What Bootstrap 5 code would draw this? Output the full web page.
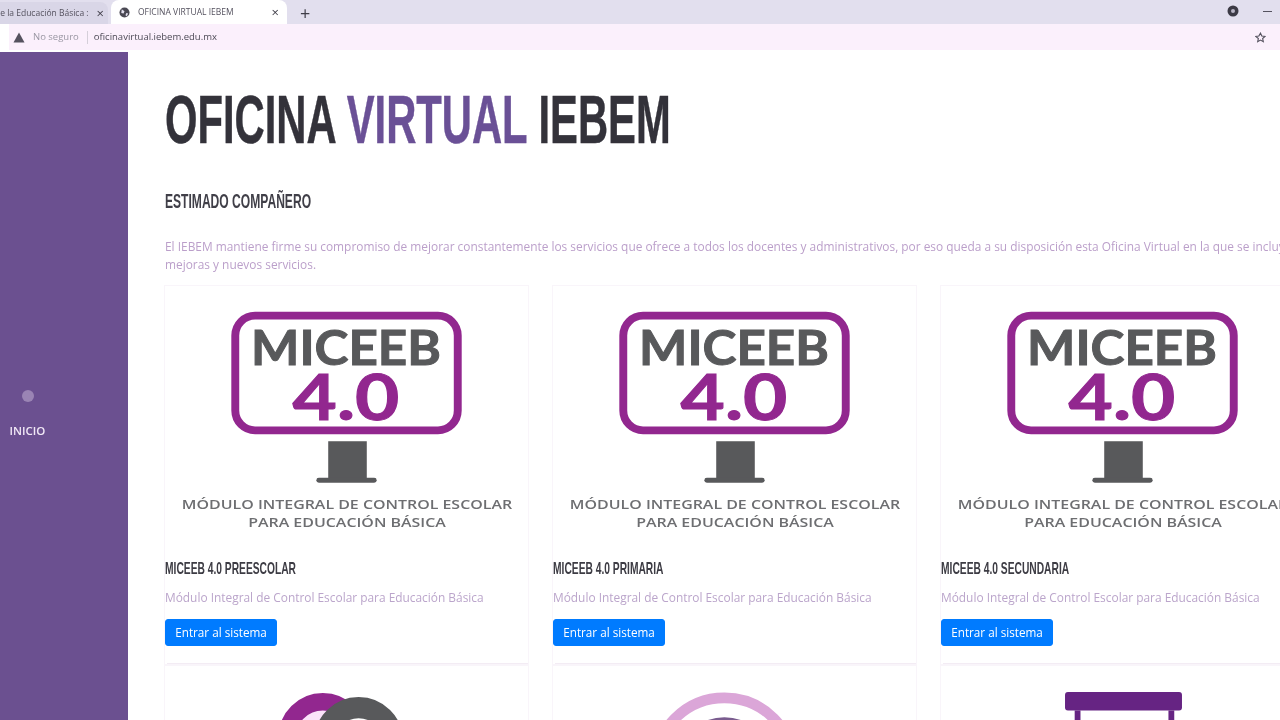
<!DOCTYPE html>
<html lang="es">
<head>
    <meta charset="UTF-8" />
    <title>OFICINA VIRTUAL IEBEM</title>
    <link rel="stylesheet" href="https://cdn.jsdelivr.net/npm/bootstrap@5.3.0/dist/css/bootstrap.min.css" />
    <style>
        html, body { height: 720px; overflow: hidden; background: #fff; }
        body { font-family: "Open Sans", "Liberation Sans", sans-serif; filter: blur(.35px); }
        .tab-strip { height: 24px; background: #e2dfee; color: #55525f; }
        .tab-off { width: 108px; height: 22px; margin-top: 2px; background: #d9d6e7; border-radius: 0 8px 0 0; font-size: 8.5px; white-space: nowrap; overflow: hidden; }
        .tab-on { width: 176px; height: 24px; margin-left: 3px; background: #fff; border-radius: 8px 8px 0 0; font-size: 8.5px; }
        .tab-x { font-size: 13px; line-height: 1; color: #3f3d48; }
        .tab-plus { font-size: 18px; line-height: 1; margin-left: 13px; color: #3f3d48; }
        .win-btns { margin-top: 5px; }
        .win-min { width: 9px; height: 1px; margin: 0 8px 0 24px; background: #55525f; }
        .addr-bar { height: 26px; background: #fff; }
        .addr-pill { height: 26px; margin-left: 9px; background: #fbf0fc; font-size: 9.5px; }
        .addr-muted { color: #9a97a3; }
        .addr-sep { width: 1px; height: 13px; background: #d5cfd9; }
        .addr-url { color: #4d4a56; margin-left: -2px; }
        .addr-star { margin-right: 14px; }
        .page-wrap { height: 670px; border-top: 2px solid #fff; }
        .side-menu { width: 128px; background: #6b5090; padding: 338px 0 0 9px; color: #fff; }
        .side-item { width: 37px; }
        .side-dot { width: 12px; height: 12px; border-radius: 50%; background: #9a84b4; }
        .side-label { margin-top: 22px; font-size: 11.5px; font-weight: 600; line-height: 14px; color: #f1e8f6; }
        .main-area { padding: 0 0 0 36px; width: 1152px; flex: none; }
        .squeeze { display: block; font-family: "Liberation Sans Narrow", "Liberation Sans", sans-serif; font-weight: 700; white-space: nowrap; transform-origin: left center; margin: 0; }
        .big-title { font-size: 68px; line-height: 68px; margin: 33px 0 0 1px; color: #33323a; transform: scaleX(.614); -webkit-text-stroke: .5px; }
        .big-title span { color: #6a5096; }
        .sub-title { font-size: 21px; line-height: 24px; margin: 36px 0 0 1px; color: #403f48; transform: scaleX(.575); }
        .intro-text { width: 1145px; margin: 24px 0 0 1px; font-size: 11.9px; line-height: 18px; color: #bb9fca; }
        .card-row { display: flex; gap: 23px; width: 1145px; margin-top: 12px; }
        .mod-card { width: 365px; height: 380px; flex: none; border-color: #f9f5fa; border-radius: 0; background: transparent; }
        .mod-card svg { display: block; }
        .logo-line { font-family: "Open Sans", "Liberation Sans", sans-serif; font-weight: 600; font-size: 13.5px; fill: #6d6e71; text-anchor: middle; }
        .logo-big { font-family: Lato, "Liberation Sans", sans-serif; font-weight: 700; stroke-width: 1px; }
        .card-name { font-size: 17px; line-height: 20px; margin-top: 10px; color: #3d3c44; transform: scaleX(.603); }
        .card-note { margin: 9px 0 0; font-size: 11.9px; line-height: 18px; color: #bba5cb; white-space: nowrap; }
        .enter-btn { margin-top: 13px; width: 112px; height: 27px; padding: 0; font-size: 11.7px; line-height: 25px; border-radius: 3px; background: #007bff; border-color: #007bff; }
        .card-rule { height: 1px; margin: 17px 0 0 2px; background: #f3ecf4; }
        .mod-card-low { height: 60px; border-color: #f9f5fa; border-radius: 0; width: 365px; flex: none; background: transparent; }
    </style>
</head>
<body>

<div class="tab-strip d-flex align-items-start">
    <div class="tab-off d-flex align-items-center">
        <span class="flex-grow-1 overflow-hidden text-end">e la Educación Básica :</span>
        <span class="tab-x ms-2 me-1">×</span>
    </div>
    <div class="tab-on d-flex align-items-center px-2">
        <svg width="11" height="11" viewBox="0 0 12 12" class="me-2 flex-shrink-0"><circle cx="6" cy="6" r="5.5" fill="#4a4853"/><path d="M3 2.5 6 4.5 5 7 2.5 6.5ZM8 6.5 10 7 8.5 10 7 9Z" fill="#e2dfee"/></svg>
        <span class="flex-grow-1">OFICINA VIRTUAL IEBEM</span>
        <span class="tab-x">×</span>
    </div>
    <span class="tab-plus mt-1">+</span>
    <div class="ms-auto d-flex align-items-center win-btns">
        <svg width="12" height="12" viewBox="0 0 12 12"><circle cx="6" cy="6" r="5.5" fill="#3c3a45"/><circle cx="6" cy="6" r="2" fill="#b9b5c6"/></svg>
        <span class="d-block win-min"></span>
    </div>
</div>

<div class="addr-bar">
    <div class="addr-pill d-flex align-items-center gap-2">
        <svg width="12" height="11" viewBox="0 0 12 11" class="ms-1"><path d="M6 .5 11.5 10.5H.5Z" fill="#55525f"/></svg>
        <span class="addr-muted">No seguro</span>
        <span class="addr-sep"></span>
        <span class="addr-url">oficinavirtual.iebem.edu.mx</span>
        <svg width="11" height="11" viewBox="0 0 24 24" class="ms-auto addr-star"><path d="M12 2.5l2.9 6.3 6.9.8-5.1 4.7 1.4 6.8-6.1-3.4-6.1 3.4 1.4-6.8L1.400 9.600l6.900-.8Z" fill="none" stroke="#55525f" stroke-width="2.500"/></svg>
    </div>
</div>

<div class="page-wrap d-flex">
    <div class="side-menu flex-shrink-0">
        <div class="side-item d-flex flex-column align-items-center">
            <div class="side-dot"></div>
            <div class="side-label">INICIO</div>
        </div>
    </div>

    <div class="main-area">
        <h1 class="squeeze big-title">OFICINA <span>VIRTUAL</span> IEBEM</h1>
        <h2 class="squeeze sub-title">ESTIMADO COMPAÑERO</h2>
        <p class="intro-text">El IEBEM mantiene firme su compromiso de mejorar constantemente los servicios que ofrece a todos los docentes y administrativos, por eso queda a su disposición esta Oficina Virtual en la que se incluyen mejoras y nuevos servicios.</p>
        <div id="cards" class="card-row"></div>
        <div class="card-row mt-0">
            <div class="card mod-card-low">
                <svg width="365" height="60" viewBox="0 0 365 60"><circle cx="157" cy="74" r="37" fill="#fbe3fa" stroke="#92278f" stroke-width="18"/><circle cx="194" cy="78" r="35" fill="#fff" stroke="#58595b" stroke-width="22"/></svg>
            </div>
            <div class="card mod-card-low">
                <svg width="365" height="60" viewBox="0 0 365 60"><circle cx="171" cy="105" r="72" fill="none" stroke="#dba6d8" stroke-width="11"/><circle cx="171" cy="105" r="52" fill="#7a5c8f"/></svg>
            </div>
            <div class="card mod-card-low">
                <svg width="365" height="60" viewBox="0 0 365 60"><rect x="122" y="27" width="121" height="19" rx="3" fill="#662483"/><rect x="132" y="46" width="6" height="14" fill="#662483"/><rect x="229" y="46" width="6" height="14" fill="#662483"/></svg>
            </div>
        </div>
    </div>
</div>

<script src="https://cdn.jsdelivr.net/npm/bootstrap@5.3.0/dist/js/bootstrap.bundle.min.js"></script>
<script>
  const levels = ["PREESCOLAR", "PRIMARIA", "SECUNDARIA"];

  document.getElementById("cards").innerHTML = levels.map(level => `
    <div class="card mod-card">
        <svg width="365" height="266" viewBox="0 0 365 266">
            <rect x="69" y="30" width="225" height="116" rx="20" fill="#fff" stroke="#92278f" stroke-width="8"/>
            <text class="logo-big" x="85" y="80" font-size="48" fill="#58595b" stroke="#58595b" textLength="192" lengthAdjust="spacingAndGlyphs">MICEEB</text>
            <text class="logo-big" x="127" y="136" font-size="64" fill="#92278f" stroke="#92278f" textLength="108" lengthAdjust="spacingAndGlyphs">4.0</text>
            <rect x="163" y="157" width="39" height="38" fill="#58595b"/>
            <rect x="151" y="194" width="61" height="5" rx="2.500" fill="#58595b"/>
            <text class="logo-line" x="182" y="226" textLength="334" lengthAdjust="spacingAndGlyphs">MÓDULO INTEGRAL DE CONTROL ESCOLAR</text>
            <text class="logo-line" x="182" y="244" textLength="200" lengthAdjust="spacingAndGlyphs">PARA EDUCACIÓN BÁSICA</text>
        </svg>
        <h5 class="squeeze card-name">MICEEB 4.0 ${level}</h5>
        <p class="card-note">Módulo Integral de Control Escolar para Educación Básica</p>
        <a href="#" class="btn btn-primary enter-btn">Entrar al sistema</a>
        <div class="card-rule"></div>
    </div>`).join("");
</script>

</body>
</html>
